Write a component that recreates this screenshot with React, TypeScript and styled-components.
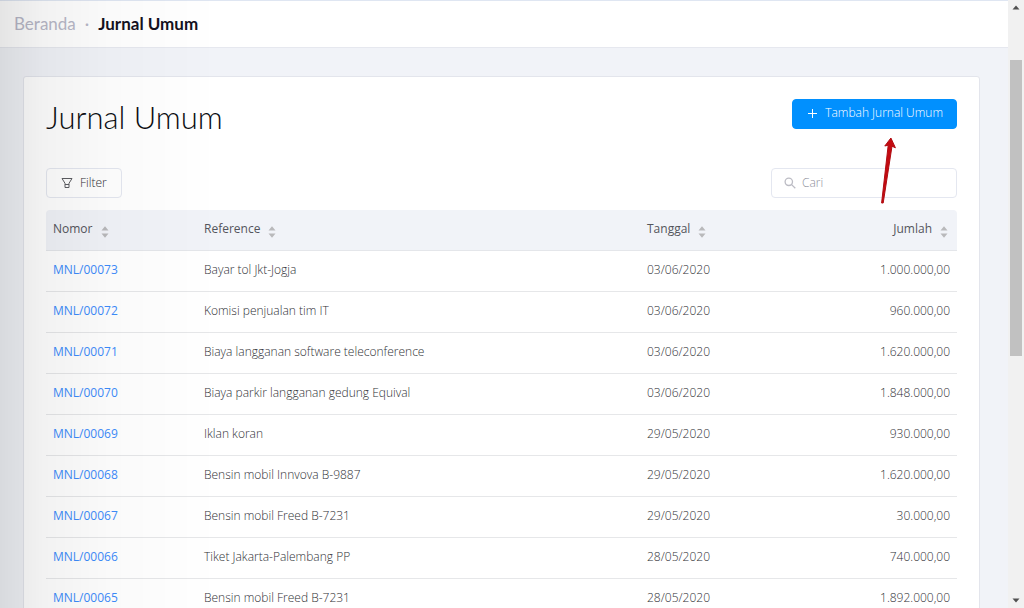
import React from "react";
import styled, { createGlobalStyle } from "styled-components";

const GlobalStyle = createGlobalStyle`
  *, *::before, *::after { box-sizing: border-box; }
  body {
    margin: 0;
    background: #f1f3f8;
    color: #303136;
    font: 300 12px/20px "Open Sans", "Noto Sans", sans-serif;
  }
  button, input { font: inherit; }
`;

const Screen = styled.div`
  display: flex;
  height: 100vh;
  overflow: hidden;
`;

const Page = styled.div`
  flex: 1;
  min-width: 0;
`;

const SideShade = styled.div`
  position: fixed;
  inset: 0 auto 0 0;
  width: 220px;
  pointer-events: none;
  background: linear-gradient(
    to right,
    rgba(0, 0, 0, 0.1),
    rgba(0, 0, 0, 0.05) 20%,
    rgba(0, 0, 0, 0.02) 50%,
    rgba(0, 0, 0, 0)
  );
`;

const TopBar = styled.header`
  display: flex;
  align-items: center;
  height: 48px;
  padding: 0 14px;
  background: #fff;
  border-top: 1px solid #dfe6f2;
  border-bottom: 1px solid #e6e8ef;
`;

const Crumbs = styled.nav`
  display: flex;
  gap: 9px;
  font-family: Lato, sans-serif;
  font-size: 17px;
  font-weight: 400;
  color: #b8b8c8;
`;

const CrumbLink = styled.a`
  color: inherit;
  text-decoration: none;
`;

const Current = styled.strong`
  font-weight: 700;
  color: #15121f;
`;

const Main = styled.main`
  padding: 28px 28px 0 23px;
`;

const Card = styled.section`
  padding: 22px;
  background: #fff;
  border: 1px solid #e3e5ec;
  border-radius: 3px;
`;

const Row = styled.div<{ $bottom: number }>`
  display: flex;
  align-items: flex-start;
  justify-content: space-between;
  margin-bottom: ${(p) => p.$bottom}px;
`;

const Title = styled.h1`
  margin: 0;
  font-family: Lato, sans-serif;
  font-size: 31px;
  line-height: 36px;
  font-weight: 300;
  color: #0c0e12;
`;

const Button = styled.button<{ $primary?: boolean }>`
  display: flex;
  align-items: center;
  gap: 7px;
  height: 30px;
  padding: ${(p) => (p.$primary ? "0 13px 2px" : "0 14px")};
  border: 1px solid ${(p) => (p.$primary ? "#0190fe" : "#e4e7f0")};
  border-radius: 4px;
  background: ${(p) => (p.$primary ? "#0190fe" : "#fff")};
  color: ${(p) => (p.$primary ? "#fff" : "#303136")};
  white-space: nowrap;
`;

const SearchBox = styled.label`
  display: flex;
  align-items: center;
  gap: 6px;
  width: 186px;
  height: 30px;
  padding: 0 12px;
  border: 1px solid #e4e7f0;
  border-radius: 4px;
  color: #bcbcc4;
`;

const SearchInput = styled.input`
  flex: 1;
  min-width: 0;
  padding: 0;
  border: 0;
  outline: 0;
  background: transparent;
  color: #303136;
  &::placeholder { color: #8e8f9b; opacity: 1; }
`;

const Table = styled.table`
  width: 100%;
  table-layout: fixed;
  border-collapse: separate;
  border-spacing: 0;
`;

const Col = styled.col<{ $width?: string }>`
  width: ${(p) => p.$width ?? "auto"};
`;

const HeadCell = styled.th<{ $right?: boolean }>`
  height: 41px;
  padding: 0 7px 2px;
  background: #f1f3f8;
  border-bottom: 1px solid #e4e6ea;
  font-weight: 400;
  color: #54555c;
  text-align: ${(p) => (p.$right ? "right" : "left")};
  &:first-child { border-top-left-radius: 4px; }
  &:last-child { border-top-right-radius: 4px; }
`;

const SortButton = styled.button`
  display: inline-flex;
  align-items: center;
  gap: 8px;
  padding: 0 2px 0 0;
  border: 0;
  background: none;
  color: inherit;
  line-height: 20px;
`;

const SortSvg = styled.svg`
  margin-top: 5px;
`;

const Cell = styled.td<{ $right?: boolean }>`
  height: 41px;
  padding: 0 7px 2px;
  border-bottom: 1px solid #e6e7e9;
  text-align: ${(p) => (p.$right ? "right" : "left")};
  white-space: nowrap;
`;

const EntryLink = styled.a`
  font-weight: 400;
  color: #3d8cfb;
  text-decoration: none;
`;

const Pointer = styled.svg`
  position: absolute;
  top: 36px;
  right: 58px;
  pointer-events: none;
`;

const PointerAnchor = styled.div`
  position: relative;
`;

const ScrollTrack = styled.div`
  display: flex;
  flex-direction: column;
  align-items: center;
  width: 16px;
  padding: 5px 0;
  background: #f1f1f1;
`;

const ScrollThumb = styled.div`
  width: 12px;
  height: 296px;
  margin: 50px 0 auto;
  background: #c1c1c1;
`;

const PlusIcon = () => (
  <svg width="12" height="12" viewBox="0 0 12 12" fill="none" stroke="currentColor" aria-hidden="true">
    <path d="M6.5 2v9M2 6.5h9" />
  </svg>
);

const FilterIcon = () => (
  <svg width="12" height="12" viewBox="0 0 12 12" fill="none" stroke="#5c5d62" strokeLinejoin="round" aria-hidden="true">
    <path d="M1 1.5h10L8 6.3v4.2H4V6.3zM4 7.5h4" />
  </svg>
);

const SearchIcon = () => (
  <svg width="12" height="12" viewBox="0 0 12 12" fill="none" stroke="currentColor" strokeWidth="1.3" aria-hidden="true">
    <circle cx="4.8" cy="4.8" r="3.7" />
    <path d="M7.6 7.6l3.7 3.7" />
  </svg>
);

const SortIcon = () => (
  <SortSvg width="8" height="12" viewBox="0 0 8 12" fill="#b9b9bb" aria-hidden="true">
    <path d="M.5 4.5L4 .3l3.5 4.2zM.5 7.5h7L4 11.7z" />
  </SortSvg>
);

const Caret = ({ down }: { down?: boolean }) => (
  <svg width="8" height="5" viewBox="0 0 8 5" fill="#505050" aria-hidden="true">
    <path d={down ? "M.5.5h7L4 4.5z" : "M.5 4.5h7L4 .5z"} />
  </svg>
);

const entries = [
  ["MNL/00073", "Bayar tol Jkt-Jogja", "03/06/2020", "1.000.000,00"],
  ["MNL/00072", "Komisi penjualan tim IT", "03/06/2020", "960.000,00"],
  ["MNL/00071", "Biaya langganan software teleconference", "03/06/2020", "1.620.000,00"],
  ["MNL/00070", "Biaya parkir langganan gedung Equival", "03/06/2020", "1.848.000,00"],
  ["MNL/00069", "Iklan koran", "29/05/2020", "930.000,00"],
  ["MNL/00068", "Bensin mobil Innvova B-9887", "29/05/2020", "1.620.000,00"],
  ["MNL/00067", "Bensin mobil Freed B-7231", "29/05/2020", "30.000,00"],
  ["MNL/00066", "Tiket Jakarta-Palembang PP", "28/05/2020", "740.000,00"],
  ["MNL/00065", "Bensin mobil Freed B-7231", "28/05/2020", "1.892.000,00"],
];

const headings = ["Nomor", "Reference", "Tanggal", "Jumlah"];

export default function App() {
  return (
    <Screen>
      <GlobalStyle />
      <Page>
        <TopBar>
          <Crumbs aria-label="Breadcrumb">
            <CrumbLink href="#">Beranda</CrumbLink>
            <span>·</span>
            <Current>Jurnal Umum</Current>
          </Crumbs>
        </TopBar>
        <Main>
          <Card>
            <Row $bottom={33}>
              <Title>Jurnal Umum</Title>
              <PointerAnchor>
                <Button type="button" $primary>
                  <PlusIcon />
                  Tambah Jurnal Umum
                </Button>
                <Pointer width="20" height="72" viewBox="0 0 20 72" aria-hidden="true">
                  <path
                    d="M11.9 3L5.8 11l3.4-.8L2.6 68h1.6l8.8-56.8 3.4 1.6z"
                    fill="#c40a10"
                    stroke="#b00c12"
                    strokeLinejoin="round"
                  />
                </Pointer>
              </PointerAnchor>
            </Row>
            <Row $bottom={12}>
              <Button type="button">
                <FilterIcon />
                Filter
              </Button>
              <SearchBox>
                <SearchIcon />
                <SearchInput type="text" placeholder="Cari" aria-label="Cari" />
              </SearchBox>
            </Row>
            <Table>
              <colgroup>
                <Col $width="151px" />
                <Col />
                <Col $width="160px" />
                <Col $width="157px" />
              </colgroup>
              <thead>
                <tr>
                  {headings.map((name, i) => (
                    <HeadCell key={name} scope="col" $right={i === 3}>
                      <SortButton type="button">
                        {name}
                        <SortIcon />
                      </SortButton>
                    </HeadCell>
                  ))}
                </tr>
              </thead>
              <tbody>
                {entries.map(([number, reference, date, amount]) => (
                  <tr key={number}>
                    <Cell>
                      <EntryLink href="#">{number}</EntryLink>
                    </Cell>
                    <Cell>{reference}</Cell>
                    <Cell>{date}</Cell>
                    <Cell $right>{amount}</Cell>
                  </tr>
                ))}
              </tbody>
            </Table>
          </Card>
        </Main>
      </Page>
      <ScrollTrack aria-hidden="true">
        <Caret />
        <ScrollThumb />
        <Caret down />
      </ScrollTrack>
      <SideShade />
    </Screen>
  );
}
